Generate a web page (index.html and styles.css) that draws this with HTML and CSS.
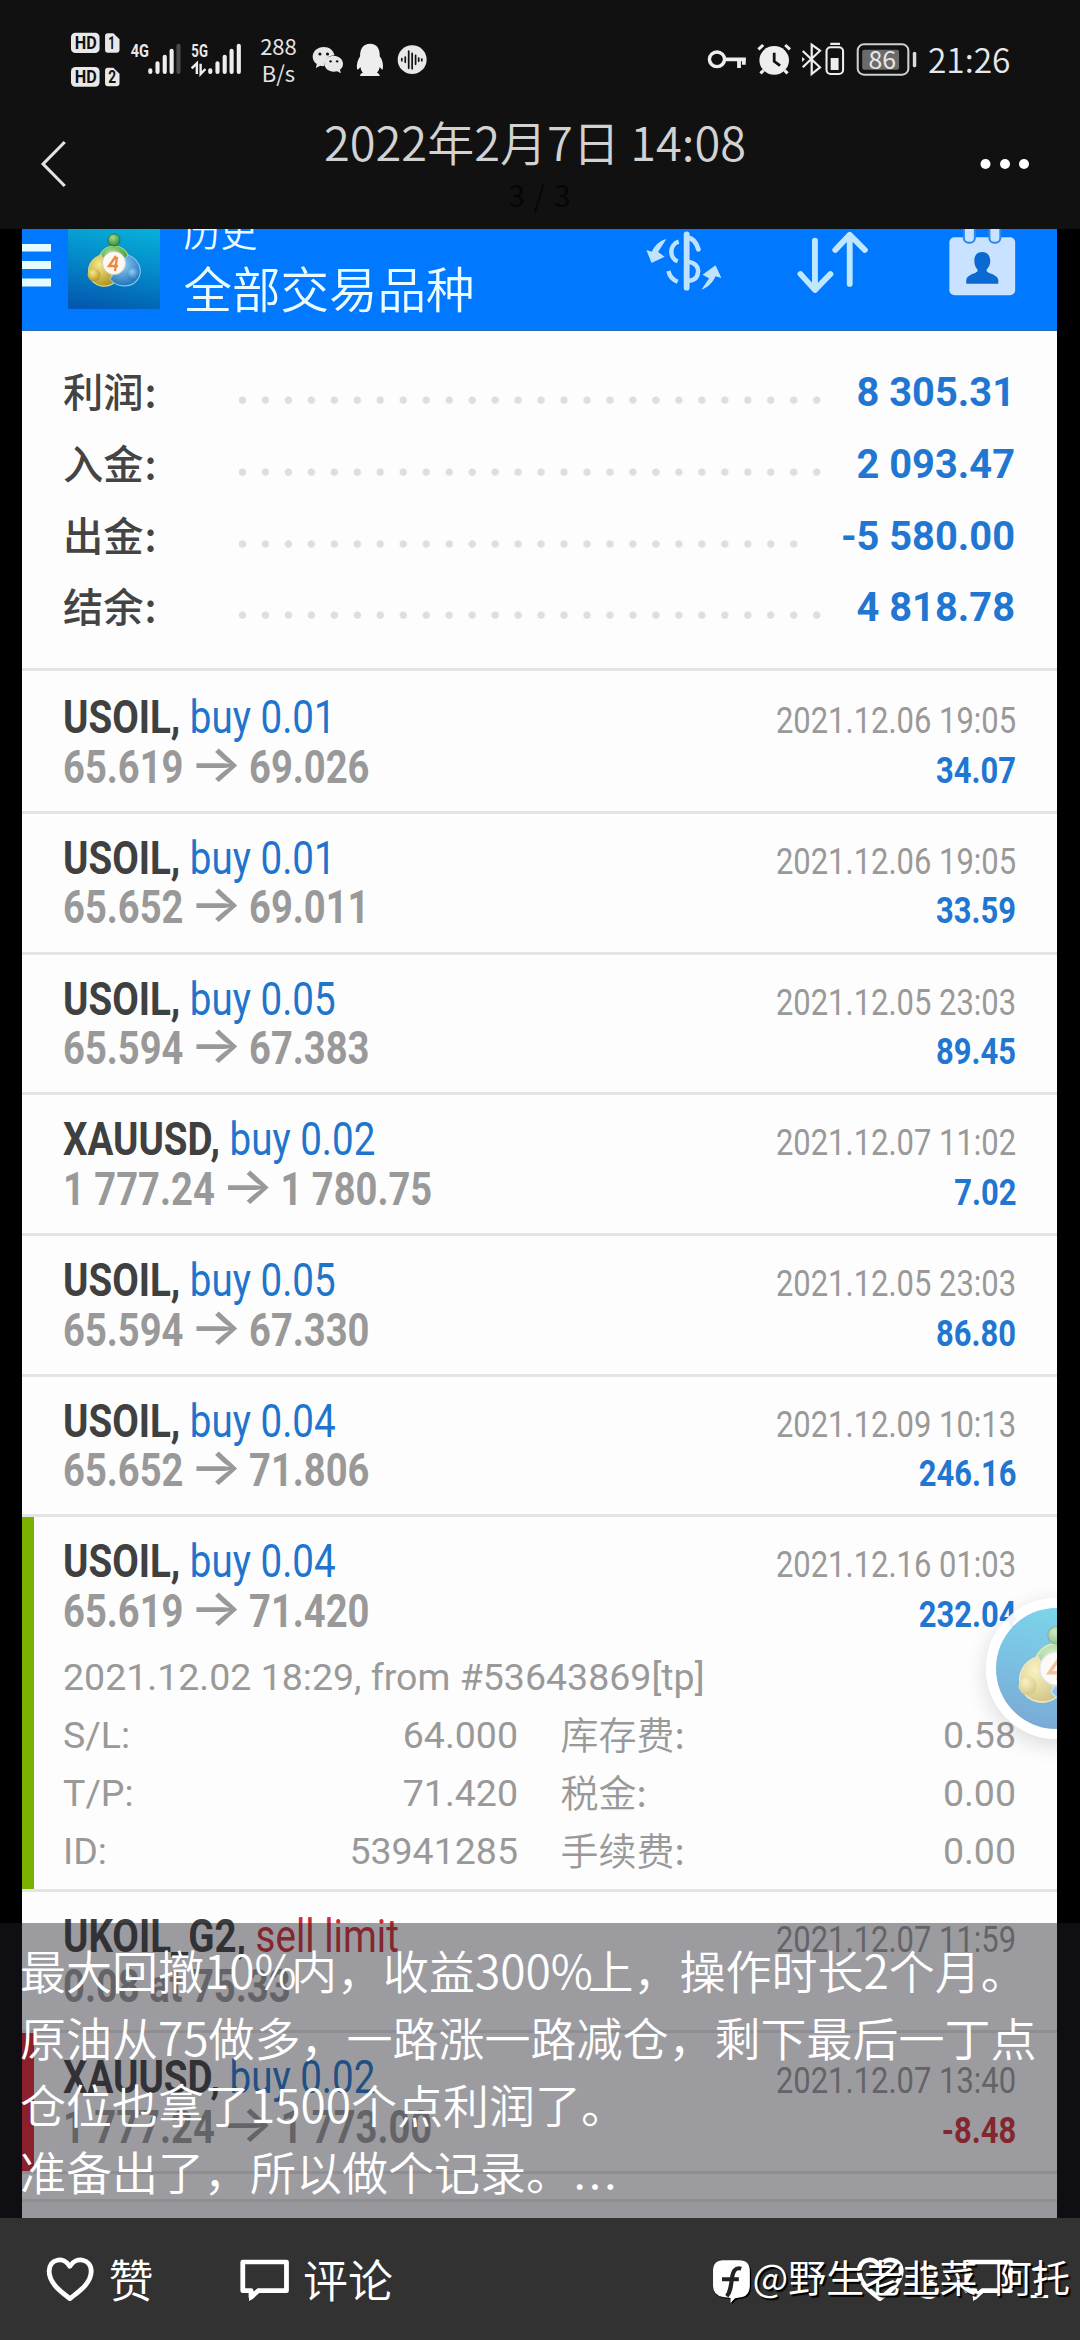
FILE: index.html
```html
<!DOCTYPE html>
<html lang="zh-CN">
<head>
<meta charset="utf-8">
<title>2022年2月7日 14:08</title>
<link rel="stylesheet" href="styles.css">
</head>
<body>
<svg class="defs" aria-hidden="true">
  <defs>
    <radialGradient id="gGreen" cx=".4" cy=".3" r=".8"><stop offset="0" stop-color="#a5dc83"/><stop offset="1" stop-color="#21813a"/></radialGradient>
    <radialGradient id="gYellow" cx=".4" cy=".3" r=".8"><stop offset="0" stop-color="#f7e98a"/><stop offset="1" stop-color="#a98d13"/></radialGradient>
    <radialGradient id="gBlue" cx=".4" cy=".3" r=".8"><stop offset="0" stop-color="#8fd0f5"/><stop offset="1" stop-color="#1668b4"/></radialGradient>
    <linearGradient id="gTile" x1=".5" y1="0" x2=".3" y2="1"><stop offset="0" stop-color="#08b4dc"/><stop offset=".5" stop-color="#0489c9"/><stop offset="1" stop-color="#0359b0"/></linearGradient>
    <symbol id="mt4" viewBox="0 0 92 92">
      <rect width="92" height="92" fill="url(#gTile)"/>
      <path d="M31 49C29 39 35 29 46 29s17 10 15 20z" fill="url(#gGreen)" stroke="#b8d970" stroke-width="1.2"/>
      <circle cx="46" cy="23" r="6" fill="url(#gGreen)" stroke="#1a6c30" stroke-width=".7"/>
      <path d="M33 38C23 41 18 51 22 60c4 10 17 12 25 5z" fill="url(#gYellow)" stroke="#d5d48a" stroke-width="1.2"/>
      <path d="M60 38c9 3 15 13 11 22-5 11-21 12-29 2z" fill="url(#gBlue)" stroke="#7ec9ee" stroke-width="1.2"/>
      <circle cx="26" cy="58" r="6.3" fill="url(#gYellow)"/>
      <circle cx="65" cy="57" r="6" fill="url(#gBlue)"/>
      <circle cx="46" cy="46" r="11.6" fill="#fbf8f2" stroke="#c9cfc4" stroke-width="1"/>
      <path d="M48 39l-7 10h9M49 40l-2 14" fill="none" stroke="#ec8a45" stroke-width="2.4"/>
    </symbol>
    <symbol id="heart" viewBox="131 1066 145 140" preserveAspectRatio="none">
      <path d="M203 1194C182 1176 143 1150 143 1112c0-38 42-46 60-15 18-31 62-23 62 15 0 38-41 64-62 82z" fill="none" stroke="#fff" stroke-width="14" stroke-linejoin="round"/>
    </symbol>
    <symbol id="bubble" viewBox="692 1072 150 132" preserveAspectRatio="none">
      <path d="M703 1084h127v86h-82l-21 20v-20h-24z" fill="none" stroke="#fff" stroke-width="14" stroke-linejoin="round"/>
      <path d="M721 1172v30l34-30z" fill="#fff"/>
    </symbol>
  </defs>
</svg>

<div class="screen">
  <header class="status">
    <svg class="ic hd" viewBox="206 90 141 180" preserveAspectRatio="none">
      <rect x="206" y="98" width="83" height="61" rx="13" fill="#e8e8e8"/><rect x="206" y="201" width="83" height="59" rx="13" fill="#e8e8e8"/>
      <path d="M313 100h16l18 18v31q0 9-9 9h-25q-8 0-8-9v-40q0-9 8-9zM313 203h16l18 18v29q0 9-9 9h-25q-8 0-8-9v-38q0-9 8-9z" fill="#e8e8e8"/>
      <g class="badge"><text x="217" y="148" textLength="64" lengthAdjust="spacingAndGlyphs">HD</text><text x="217" y="250" textLength="64" lengthAdjust="spacingAndGlyphs">HD</text><text x="314" y="148" textLength="20" lengthAdjust="spacingAndGlyphs">1</text><text x="314" y="250" textLength="23" lengthAdjust="spacingAndGlyphs">2</text></g>
    </svg>
    <svg class="ic sig4" viewBox="376 90 150 180" preserveAspectRatio="none">
      <text class="gen" x="378" y="172" textLength="53" lengthAdjust="spacingAndGlyphs">4G</text>
      <g stroke="#eee" stroke-width="12" stroke-linecap="round"><path d="M435 211v5M456 190v26M477 170v46M497 152v64"/><path d="M517 137v79" stroke="#4a4a4a"/></g>
    </svg>
    <svg class="ic sig5" viewBox="556 90 150 180" preserveAspectRatio="none">
      <text class="gen" x="557" y="172" textLength="48" lengthAdjust="spacingAndGlyphs">5G</text>
      <g stroke="#eee" stroke-width="12" stroke-linecap="round"><path d="M612 211v5M633 190v26M654 170v46M674 152v64M695 137v79"/></g>
      <path d="M558 205l15-15v32M584 191v31l14-15" fill="none" stroke="#eee" stroke-width="7"/>
    </svg>
    <div class="speed"><span>288</span><span>B/s</span></div>
    <svg class="ic wx" viewBox="906 90 94 180" preserveAspectRatio="none">
      <path d="M940 141c-18 0-32 13-32 29 0 9 5 17 12 22l-3 12 13-7c4 1 7 2 12 1 0-20 14-32 29-32-2-15-15-25-31-25z" fill="#e8e8e8"/>
      <path d="M969 167c-16 0-27 11-27 24s12 24 27 24l10-1 11 6-3-11c6-4 9-11 9-18 0-13-12-24-27-24z" fill="#e8e8e8"/>
      <g fill="#111"><circle cx="929" cy="162" r="4.500"/><circle cx="951" cy="162" r="4.500"/><circle cx="960" cy="184" r="3.500"/><circle cx="979" cy="184" r="3.500"/></g>
    </svg>
    <svg class="ic qq" viewBox="1034 90 82 180" preserveAspectRatio="none">
      <path d="M1075 131c-20 0-30 16-29 38-7 10-11 25-9 39 4 1 7-3 10-7 1 8 3 13 7 17-6 2-8 5-8 10h57c0-5-3-8-8-10 4-4 7-9 8-17 3 4 6 8 9 7 2-14-1-29-9-39 1-22-8-38-28-38z" fill="#eee"/>
    </svg>
    <svg class="ic voice" viewBox="1154 90 88 180" preserveAspectRatio="none">
      <ellipse cx="1198" cy="179" rx="42" ry="43" fill="#e8e8e8"/>
      <path d="M1168 176v6M1178 171v16M1188 153v52M1198 160v46M1208 166v27M1217 174v10M1226 177v5" stroke="#111" stroke-width="5" stroke-linecap="round"/>
    </svg>
    <svg class="ic key" viewBox="485 90 115 180" preserveAspectRatio="none">
      <ellipse cx="514" cy="178" rx="22" ry="22" fill="none" stroke="#eee" stroke-width="10"/>
      <path d="M537 178h61M578 178v26M592 178v16" fill="none" stroke="#eee" stroke-width="11"/>
    </svg>
    <svg class="ic alarm" viewBox="630 90 100 180" preserveAspectRatio="none">
      <circle cx="680" cy="181" r="43" fill="#eee"/>
      <path d="M634 148l14-13M712 135l14 13M649 211l-9 9M710 211l9 9" stroke="#eee" stroke-width="9"/>
      <path d="M680 158v26l17 13" fill="none" stroke="#111" stroke-width="8"/>
    </svg>
    <svg class="ic bt" viewBox="756 90 130 180" preserveAspectRatio="none">
      <path d="M764 153l50 49-24 20v-88l24 18-50 50" fill="none" stroke="#eee" stroke-width="6.500"/>
      <path d="M762 171l8 7-8 8zM844 128h28v7h-28zM845 174h23v36h-23z" fill="#eee"/>
      <rect x="833" y="142" width="48" height="80" rx="12" fill="none" stroke="#eee" stroke-width="6"/>
    </svg>
    <svg class="ic batt" viewBox="917 90 178 180" preserveAspectRatio="none">
      <rect x="922" y="133" width="147" height="91" rx="18" fill="none" stroke="#d0d0d0" stroke-width="6"/>
      <rect x="935" y="149" width="107" height="60" rx="6" fill="#6b6b6b"/>
      <rect x="1082" y="155" width="10" height="47" rx="5" fill="#ddd"/>
      <text class="pct" x="953" y="206" textLength="80" lengthAdjust="spacingAndGlyphs">86</text>
    </svg>
    <div class="clock">21:26</div>
  </header>

  <nav class="topnav">
    <svg class="back" viewBox="114 420 80 145" preserveAspectRatio="none"><path d="M186 426l-63 66 63 66" fill="none" stroke="#e2e2e2" stroke-width="9"/></svg>
    <div class="heading"><h1>2022年2月7日 14:08</h1><p>3 / 3</p></div>
    <svg class="more" viewBox="0 0 50 12"><g fill="#fff"><circle cx="5.500" cy="6" r="5"/><circle cx="25" cy="6" r="5"/><circle cx="44" cy="6" r="5"/></g></svg>
  </nav>

  <main class="photo">
    <div class="page">
      <div class="appbar">
        <svg class="menu" viewBox="0 0 29 44"><path d="M0 0h29v7.500H0zM0 17h29v8H0zM0 34.500h29v8H0z" fill="#e6fbff"/></svg>
        <svg class="tile"><use href="#mt4"/></svg>
        <div class="names"><span class="sub">历史</span><span class="main">全部交易品种</span></div>
        <svg class="act cash" viewBox="303 687 226 195" preserveAspectRatio="none" fill="none" stroke="#bfe2ff">
          <path d="M424 703v160" stroke-width="17" stroke-linecap="round"/>
          <path d="M427 713c14 2 25 13 31 35" stroke-width="14" stroke-linecap="round"/>
          <path d="M428 785c22 4 31 14 29 31-1 17-12 26-29 27M401 725c-28 8-28 50-3 59M371 813c4 18 13 27 27 32" stroke-width="13"/>
          <path d="M365 717l-24 39 19 14-38 19-15-39 16 5c8-19 24-34 42-38zM467 869l22-34-19-11 38-28 17 38-17-5c-8 19-23 34-41 40z" fill="#bfe2ff" stroke="none"/>
        </svg>
        <svg class="act sort" viewBox="744 687 212 195" preserveAspectRatio="none"><path d="M799 722v145M757 822l42 48 45-48M900 852V705M858 750l42-46 44 46" fill="none" stroke="#bfe8ff" stroke-width="17" stroke-linecap="round" stroke-linejoin="round"/></svg>
        <svg class="act cal" viewBox="1185 687 200 205" preserveAspectRatio="none">
          <rect x="1189" y="712" width="191" height="174" rx="15" fill="#c8e2ff"/>
          <g fill="#c8e2ff" stroke="#2b86ee" stroke-width="6"><rect x="1231" y="670" width="32" height="58" rx="14"/><rect x="1305" y="670" width="32" height="58" rx="14"/></g>
          <path d="M1284 756c-17 0-25 15-22 33 1 14 10 17 9 24-2 7-33 11-33 27v11h93v-11c0-16-32-20-34-27-1-7 8-10 10-24 3-18-6-33-23-33z" fill="#0a6ad2"/>
        </svg>
      </div>

      <section class="summary">
        <div class="sum"><span class="lab">利润<em>:</em></span><i class="dots"></i><b>8 305.31</b></div>
        <div class="sum"><span class="lab">入金<em>:</em></span><i class="dots"></i><b>2 093.47</b></div>
        <div class="sum"><span class="lab">出金<em>:</em></span><i class="dots short"></i><b>-5 580.00</b></div>
        <div class="sum"><span class="lab">结余<em>:</em></span><i class="dots"></i><b>4 818.78</b></div>
      </section>

      <article class="deal first">
        <div class="line"><span class="sym"><b>USOIL,</b> buy 0.01</span><time>2021.12.06 19:05</time></div>
        <div class="line"><span class="price">65.619 <i>→</i> 69.026</span><b class="val">34.07</b></div>
      </article>
      <article class="deal">
        <div class="line"><span class="sym"><b>USOIL,</b> buy 0.01</span><time>2021.12.06 19:05</time></div>
        <div class="line"><span class="price">65.652 <i>→</i> 69.011</span><b class="val">33.59</b></div>
      </article>
      <article class="deal">
        <div class="line"><span class="sym"><b>USOIL,</b> buy 0.05</span><time>2021.12.05 23:03</time></div>
        <div class="line"><span class="price">65.594 <i>→</i> 67.383</span><b class="val">89.45</b></div>
      </article>
      <article class="deal">
        <div class="line"><span class="sym"><b>XAUUSD,</b> buy 0.02</span><time>2021.12.07 11:02</time></div>
        <div class="line"><span class="price">1 777.24 <i>→</i> 1 780.75</span><b class="val">7.02</b></div>
      </article>
      <article class="deal">
        <div class="line"><span class="sym"><b>USOIL,</b> buy 0.05</span><time>2021.12.05 23:03</time></div>
        <div class="line"><span class="price">65.594 <i>→</i> 67.330</span><b class="val">86.80</b></div>
      </article>
      <article class="deal">
        <div class="line"><span class="sym"><b>USOIL,</b> buy 0.04</span><time>2021.12.09 10:13</time></div>
        <div class="line"><span class="price">65.652 <i>→</i> 71.806</span><b class="val">246.16</b></div>
      </article>
      <article class="deal open">
        <div class="line"><span class="sym"><b>USOIL,</b> buy 0.04</span><time>2021.12.16 01:03</time></div>
        <div class="line"><span class="price">65.619 <i>→</i> 71.420</span><b class="val">232.04</b></div>
        <div class="details">
          <span class="origin">2021.12.02 18:29, from #53643869[tp]</span>
          <span>S/L:</span><span class="num">64.000</span><span class="zh">库存费:</span><span class="num">0.58</span>
          <span>T/P:</span><span class="num">71.420</span><span class="zh">税金:</span><span class="num">0.00</span>
          <span>ID:</span><span class="num">53941285</span><span class="zh">手续费:</span><span class="num">0.00</span>
        </div>
      </article>
      <article class="deal">
        <div class="line"><span class="sym sell"><b>UKOIL_G2,</b> sell limit</span><time>2021.12.07 11:59</time></div>
        <div class="line"><span class="price">0.08 at 75.33</span></div>
      </article>
      <article class="deal loss">
        <div class="line"><span class="sym"><b>XAUUSD,</b> buy 0.02</span><time>2021.12.07 13:40</time></div>
        <div class="line"><span class="price">1 777.24 <i>→</i> 1 773.00</span><b class="val neg">-8.48</b></div>
      </article>
      <div class="tail"></div>
      <div class="rest"></div>
      <div class="bubble"><div class="disc"><svg><use href="#mt4"/></svg></div></div>
    </div>
    <div class="caption">
      <p>最大回撤10<em>%</em>内，收益300<em>%</em>上，操作时长2个月。</p>
      <p>原油从75做多，一路涨一路减仓，剩下最后一丁点</p>
      <p>仓位也拿了1500个点利润了。</p>
      <p>准备出了，所以做个记录。<span class="dotdot">…</span></p>
    </div>
  </main>

  <footer class="actions">
    <svg class="heart"><use href="#heart"/></svg><span class="like">赞</span>
    <svg class="msg"><use href="#bubble"/></svg><span class="reply">评论</span>
    <svg class="heart right"><use href="#heart"/></svg><span class="count likes">3</span>
    <svg class="msg right2"><use href="#bubble"/></svg><span class="count">1</span>
    <div class="mark">
      <svg viewBox="500 1076 118 138" preserveAspectRatio="none"><path d="M536 1084h46q32 0 32 33v42q0 30-22 35l-21 4-13 14v-15l-22-3q-29-5-29-35v-42q0-33 29-33z" fill="#000"/><path d="M533 1080h46q31 0 31 33v42q0 30-22 35l-21 4-13 14v-15l-22-3q-29-5-29-35v-42q0-33 30-33z" fill="#fff"/><path d="M585 1105c-18-5-24 8-27 29-3 25-5 42-15 54M529 1137h49" fill="none" stroke="#222" stroke-width="12"/></svg>
      <span>@野生老韭菜</span><span class="second">阿托</span>
    </div>
  </footer>
</div>
</body>
</html>
```
FILE: styles.css
```css
* { box-sizing: border-box; margin: 0; padding: 0; }
html, body { width: 1080px; height: 2340px; overflow: hidden; background: #000; }
body { font-family: Roboto, "Noto Sans CJK SC", sans-serif; }
i, em { font-style: normal; }
.defs { position: absolute; width: 0; height: 0; }
.screen { width: 1080px; height: 2340px; display: flex; flex-direction: column; }

.status { height: 115px; background: #111; display: flex; padding: 30px 0 0 71px; flex: none; }
.ic { height: 60px; flex: none; display: block; }
.hd { width: 48.5px; }
.badge text { font: 700 53px Roboto, sans-serif; fill: #111; }
.gen { font: 700 54px Roboto, sans-serif; fill: #e8e8e8; }
.pct { font: 400 72px "Noto Sans CJK SC", sans-serif; fill: #e8e8e8; }
.sig4 { width: 51.6px; margin-left: 10px; }
.sig5 { width: 51.6px; margin-left: 10.4px; }
.speed { width: 40px; margin-left: 15.4px; display: flex; flex-direction: column; align-items: center; font: 400 22px/27px "Noto Sans CJK SC", sans-serif; color: #e4e4e4; margin-top: 2px; }
.wx { width: 32.4px; margin-left: 13.5px; }
.qq { width: 28.2px; margin-left: 11.7px; }
.voice { width: 30.3px; margin-left: 13px; }
.key { width: 39.6px; margin-left: 279.4px; }
.alarm { width: 34.4px; margin-left: 10.3px; }
.bt { width: 44.8px; margin-left: 9px; }
.batt { width: 61.3px; margin-left: 10.6px; }
.clock { margin-left: 11px; font: 350 33.5px/58px "Noto Sans CJK SC", sans-serif; color: #e8e8e8; }

.topnav { height: 114px; background: #111; display: flex; flex: none; }
.back { width: 27.5px; height: 48.3px; margin: 25px 0 0 39.5px; flex: none; }
.heading { width: 440px; margin-left: 248px; text-align: center; font-family: "Noto Sans CJK SC", sans-serif; }
.heading h1 { font-size: 47px; font-weight: 350; line-height: 56px; color: #d2d2d2; white-space: nowrap; margin-top: -2px; }
.heading p { font-size: 30px; line-height: 40px; color: #060606; margin-top: 5px; padding-left: 9px; word-spacing: 2px; }
.more { width: 50px; height: 12px; margin: 43px 0 0 225px; }

.photo { height: 1989px; position: relative; background: #000; padding: 0 23px 0 22px; flex: none; }
.page { position: relative; height: 1989px; background: #fdfdfd; overflow: hidden; }
.appbar { height: 102px; background: #0078ff; border-bottom: 1.5px solid #2a6cb8; display: flex; overflow: hidden; }
.menu { width: 29px; height: 44px; margin-top: 14.5px; flex: none; }
.tile { width: 92px; height: 92px; margin: -12px 0 0 17px; flex: none; }
.names { margin-left: 23.5px; width: 320px; display: flex; flex-direction: column; font-family: "Noto Sans CJK SC", sans-serif; font-weight: 350; color: #eafcff; margin-top: -20px; flex: none; }
.sub { font-size: 37px; line-height: 44px; }
.main { font-size: 48.5px; line-height: 72px; margin-top: -2px; }
.act { flex: none; }
.cash { width: 77.8px; height: 65px; margin-left: 141.2px; }
.sort { width: 73px; height: 65px; margin-left: 73.7px; }
.cal { width: 68.9px; height: 68.3px; margin-left: 78.9px; }

.summary { height: 339.5px; padding: 26px 42px 0 41px; border-bottom: 3px solid #e4e4e4; }
.sum { height: 71.8px; display: flex; align-items: flex-start; line-height: 71.8px; }
.lab { width: 168px; font: 500 40.3px/66px "Noto Sans CJK SC", sans-serif; color: #444; }
.lab em { margin-left: 1px; }
.dots { width: 597.3px; height: 71.8px; background: radial-gradient(circle at 11.48px 43px, #dedede 3.2px, transparent 4.2px) 0 0 / 22.97px 71.8px repeat-x; }
.dots.short { width: 574.4px; }
.sum b { margin-left: auto; font-size: 39.8px; font-weight: 700; color: #2176d2; }

.deal { height: 140.7px; padding: 21px 41px 0 41px; border-bottom: 3px solid #e4e4e4; }
.deal.first { height: 143.4px; padding-top: 23.5px; }
.line { height: 48.6px; line-height: 48.6px; display: flex; justify-content: space-between; align-items: baseline; white-space: nowrap; }
.sym, .price { display: inline-block; transform: scaleX(.847); transform-origin: left; }
.price { transform: scaleX(.829); }
.line time, .val { display: inline-block; transform: scaleX(.825); transform-origin: right; }
.sym { font-size: 45.5px; color: #1f74cc; }
.sym b { color: #404040; font-weight: 700; }
.sym.sell { color: #d02a35; }
.price { font-size: 46px; font-weight: 700; color: #999; }
.price i { display: inline-block; font-family: Inter, sans-serif; font-weight: 500; font-size: 60px; line-height: 20px; height: 20px; margin: 0 -.5px; transform: translateY(2.5px) scale(1.12, .86); }
.line time { font-size: 37.5px; color: #999; }
.val { font-size: 37.5px; color: #2176d2; }
.val.neg { color: #d02a35; }
.deal.open { height: 375px; background: linear-gradient(#7ab000, #7ab000) 0 0 / 12px 100% no-repeat; }
.deal.loss { background: linear-gradient(#dc1f2c, #dc1f2c) 0 0 / 12px 100% no-repeat; }
.details { margin-top: 12.5px; display: grid; grid-template-columns: 120px 335px 1fr 120px; font-size: 37.5px; line-height: 58px; color: #999; }
.details span { height: 58px; }
.origin { grid-column: 1 / -1; }
.num { text-align: right; }
.zh { padding-left: 42.5px; font: 350 38px/54px "Noto Sans CJK SC", sans-serif; }
.tail { height: 28px; border-bottom: 3px solid #e4e4e4; }
.rest { height: 20px; background: #f6f6f6; }
.bubble { position: absolute; left: 963.5px; top: 1369px; width: 141px; height: 141px; border-radius: 50%; border: 10px solid rgba(255,255,255,.92); box-shadow: 0 6px 22px rgba(0,0,0,.14); }
.disc { width: 121px; height: 121px; border-radius: 50%; overflow: hidden; opacity: .52; }
.disc svg { width: 133px; height: 133px; margin: -6px; display: block; }

.caption { position: absolute; left: 0; right: 0; bottom: 0; height: 295px; background: rgba(34,34,43,.443); padding: 12.5px 0 0 20px; font: 350 46px/67px "Noto Sans CJK SC", sans-serif; color: #fff; white-space: nowrap; }
.caption p { height: 67px; }
.caption em { letter-spacing: -5.5px; }
.dotdot { display: inline-block; line-height: 40px; transform: translateY(14px); }

.actions { height: 122px; position: relative; background: #323232; display: flex; flex: none; font: 350 45px/122px "Noto Sans CJK SC", sans-serif; color: #fff; }
.heart { width: 50px; height: 46.7px; margin: 37.5px 0 0 45px; flex: none; }
.like { margin-left: 13.5px; }
.msg { width: 51.6px; height: 44px; margin: 39.5px 0 0 85px; flex: none; }
.reply { margin-left: 13px; width: 90px; }
.heart.right { margin-left: 462px; }
.msg.right2 { margin-left: 22px; }
.count { font-size: 44px; margin-left: 12px; width: 24px; }
.mark { position: absolute; left: 712px; top: 33.5px; display: flex; font: 400 37.8px/48px "Noto Sans CJK SC", sans-serif; text-shadow: 2px 2px 1px #000; white-space: nowrap; }
.mark svg { width: 40.6px; height: 46px; margin-top: 7px; flex: none; }
.mark .second { margin-left: 17px; }
```
